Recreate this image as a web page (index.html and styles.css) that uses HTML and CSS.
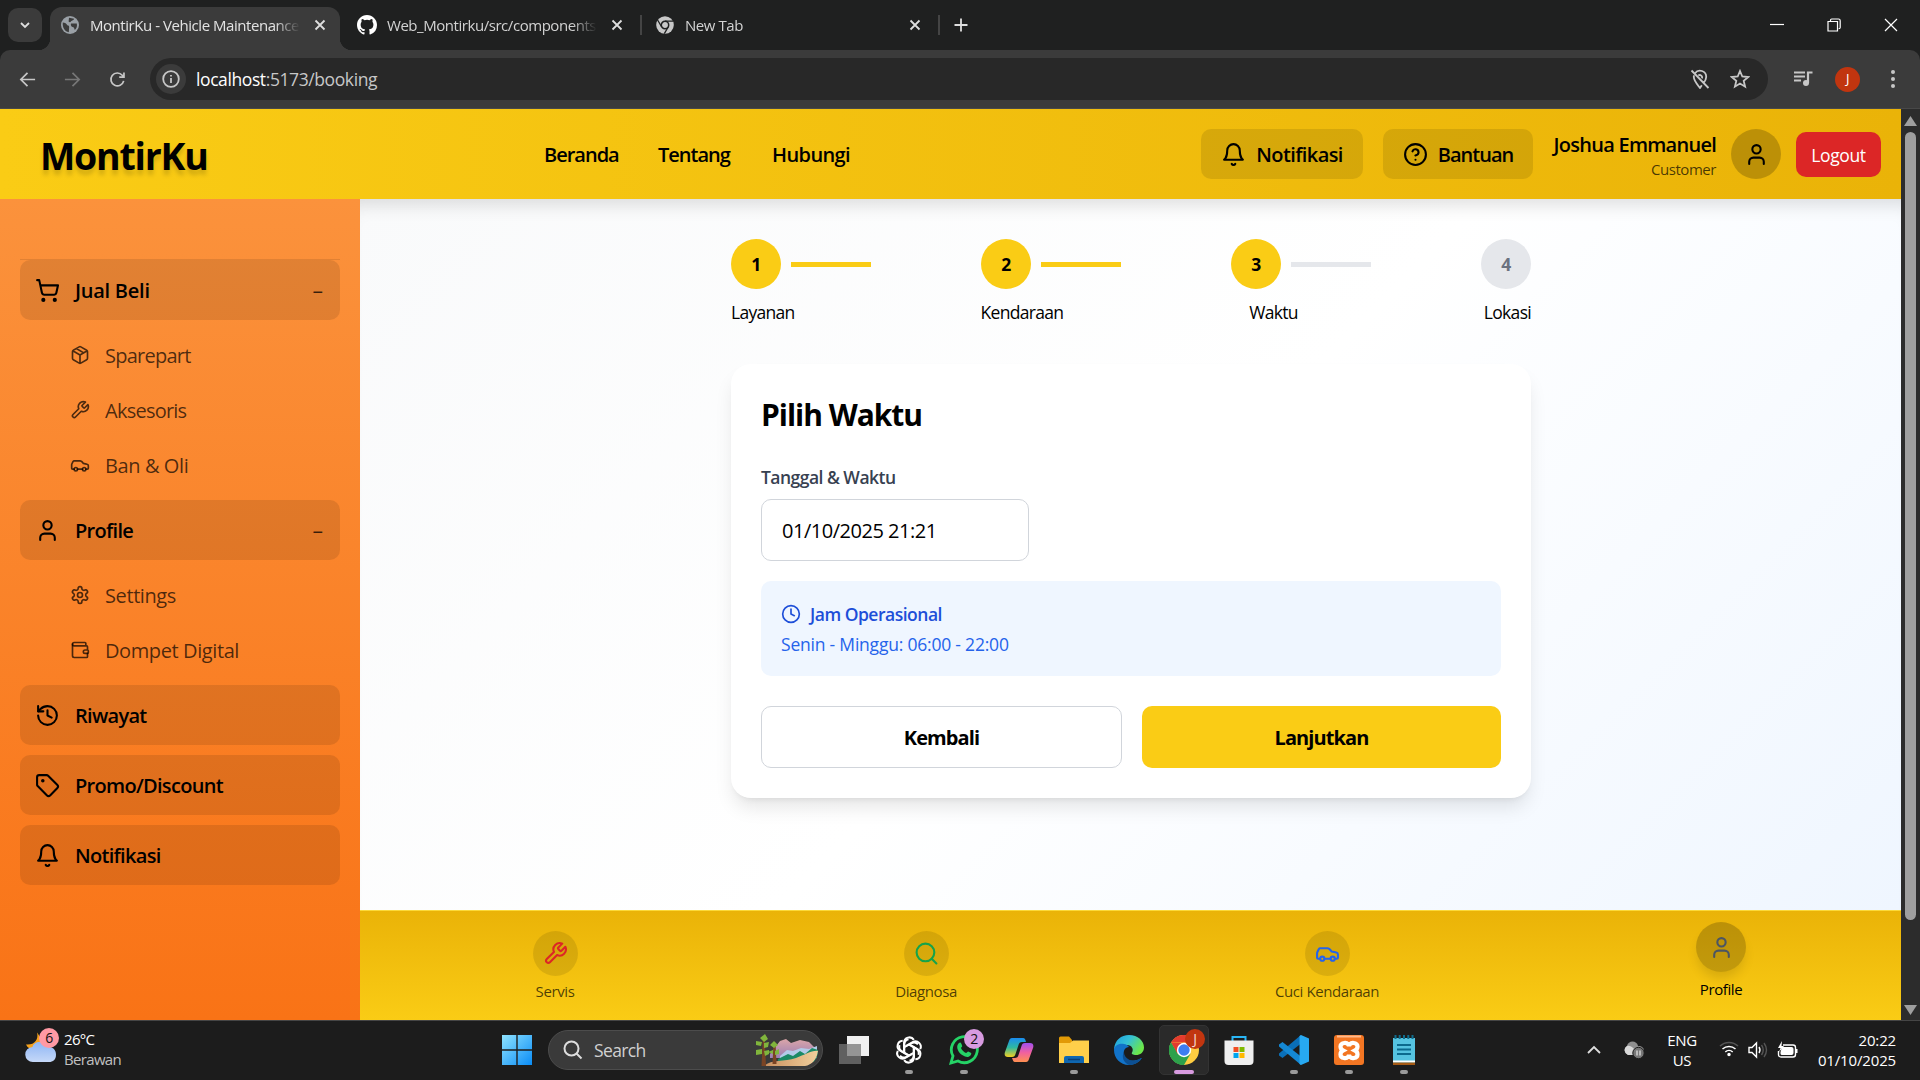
FILE: index.html
```html
<!DOCTYPE html>
<html lang="id">
<head>
<meta charset="utf-8">
<title>MontirKu - Vehicle Maintenance</title>
<link rel="stylesheet" href="styles.css">
</head>
<body>
<svg class="defs" width="0" height="0">
  <symbol id="bell" viewBox="0 0 24 24"><path d="M6 8a6 6 0 0 1 12 0c0 7 3 9 3 9H3s3-2 3-9"/><path d="M10.3 21a1.94 1.94 0 0 0 3.4 0"/></symbol>
  <symbol id="user" viewBox="0 0 24 24"><path d="M19 21v-2a4 4 0 0 0-4-4H9a4 4 0 0 0-4 4v2"/><circle cx="12" cy="7" r="4"/></symbol>
  <symbol id="wrench" viewBox="0 0 24 24"><path d="M14.7 6.3a1 1 0 0 0 0 1.4l1.6 1.6a1 1 0 0 0 1.4 0l3.77-3.77a6 6 0 0 1-7.94 7.94l-6.91 6.91a2.12 2.12 0 0 1-3-3l6.91-6.91a6 6 0 0 1 7.94-7.94l-3.76 3.76z"/></symbol>
  <symbol id="car" viewBox="0 0 24 24"><path d="M19 17h2c.6 0 1-.4 1-1v-3c0-.9-.7-1.7-1.5-1.9C18.7 10.6 16 10 16 10s-1.3-1.4-2.2-2.3c-.5-.4-1.1-.7-1.8-.7H5c-.6 0-1.1.4-1.4.9l-1.4 2.9A3.7 3.7 0 0 0 2 12v4c0 .6.4 1 1 1h2"/><circle cx="7" cy="17" r="2"/><path d="M9 17h6"/><circle cx="17" cy="17" r="2"/></symbol>
  <symbol id="close" viewBox="0 0 12 12"><path d="M1.5 1.5l9 9M10.5 1.5l-9 9"/></symbol>
</svg>

<div class="tabstrip">
  <div class="tab-search"><svg class="ln" width="12" height="12" viewBox="0 0 12 12"><path d="M2 4l4 4 4-4"/></svg></div>
  <div class="tab active">
    <svg class="fav" viewBox="0 0 18 18"><circle cx="9" cy="9" r="9" fill="#9aa0a6"/><path d="M1.8 6.5c2 .2 4 1 4.500 2.800 1.600.2 2.200 1.200 1.800 2.600l-.3 4.300c-3.800-.6-6.600-4.600-6-9.700zM8 1.800l5.200 1c-.6 1.800-2 1.600-3.200 2.400-.4 1.500-1.700 1.200-2.400.2zM10 7.500h5.800c.6 2.700-.2 5.200-2 6.600-.5-1.700-.7-3-2.300-3.200C10 10.500 9.500 9 10 7.500z" fill="#3b3b3b"/></svg>
    <span class="tab-title">MontirKu - Vehicle Maintenance</span>
    <svg class="ln x" viewBox="0 0 12 12"><use href="#close"/></svg>
  </div>
  <div class="tab">
    <svg class="fav gh" viewBox="0 0 16 16"><path fill="#fff" d="M8 0C3.580 0 0 3.580 0 8c0 3.540 2.290 6.530 5.470 7.590.4.070.550-.17.550-.38 0-.19-.010-.82-.010-1.490-2.010.370-2.530-.49-2.690-.94-.09-.23-.48-.94-.82-1.130-.28-.15-.68-.52-.010-.53.630-.010 1.080.580 1.230.820.720 1.210 1.870.870 2.330.660.070-.52.280-.87.510-1.070-1.780-.2-3.640-.89-3.640-3.950 0-.87.310-1.590.820-2.150-.08-.2-.36-1.020.080-2.120 0 0 .670-.21 2.200.820a7.600 7.600 0 0 1 4 0c1.530-1.040 2.200-.82 2.200-.82.440 1.100.160 1.920.080 2.120.510.560.820 1.270.820 2.150 0 3.070-1.870 3.750-3.650 3.950.290.250.540.730.540 1.480 0 1.070-.010 1.930-.010 2.200 0 .210.150.460.550.380A8 8 0 0 0 16 8c0-4.420-3.580-8-8-8z"/></svg>
    <span class="tab-title">Web_Montirku/src/components</span>
    <svg class="ln x" viewBox="0 0 12 12"><use href="#close"/></svg>
  </div>
  <i class="sep"></i>
  <div class="tab newtab">
    <svg class="fav" viewBox="0 0 18 18"><circle cx="9" cy="9" r="8.800" fill="#c7c7c7"/><circle cx="9" cy="9" r="3.700" fill="#c7c7c7" stroke="#1f2020" stroke-width="1.500"/><path d="M9 5.200h8.200M5.700 11L1.600 4M12.200 11L8.300 17.700" stroke="#1f2020" stroke-width="1.300"/></svg>
    <span class="tab-title">New Tab</span>
    <svg class="ln x" viewBox="0 0 12 12"><use href="#close"/></svg>
  </div>
  <i class="sep"></i>
  <svg class="ln plus" width="14" height="14" viewBox="0 0 14 14"><path d="M7 .5v13M.5 7h13"/></svg>
  <div class="win">
    <svg viewBox="0 0 14 14"><path d="M0 6.500h14"/></svg>
    <svg viewBox="0 0 14 14"><path d="M1 3.500h9.500V13H1zM3.500 3.200V2.200q0-1.200 1.200-1.200h6.800q1.700 0 1.700 1.700v6.800q0 1.200-1.500 1.200"/></svg>
    <svg viewBox="0 0 14 14"><path d="M1 1l12 12M13 1L1 13"/></svg>
  </div>
</div>

<div class="toolbar">
  <svg class="ln nav-ic" viewBox="0 0 20 20"><path d="M18 10H3.500M10 3L3 10l7 7"/></svg>
  <svg class="ln nav-ic dim" viewBox="0 0 20 20"><path d="M2 10h14.500M10 3l7 7-7 7"/></svg>
  <svg class="ln nav-ic" viewBox="0 0 20 20"><path d="M16.500 11.500A6.800 6.800 0 1 1 15 5.500l1.500 1.700M16.800 2.500v5h-5"/></svg>
  <div class="omnibox">
    <span class="info-chip"><svg class="ln" width="18" height="18" viewBox="0 0 18 18"><circle cx="9" cy="9" r="7.800"/><path d="M9 8v5M9 5v1.600"/></svg></span>
    <span class="url"><b>localhost</b>:5173/booking</span>
    <svg class="ln" width="20" height="20" viewBox="0 0 20 20"><path d="M5 4.200A6.200 6.200 0 0 1 16.200 8c0 2.300-1.200 4.300-2.800 6.500M11.800 16.300L10 19C7 15 3.800 11.500 3.800 8c0-.6.100-1 .2-1.600M1.500 1.500l17 17.500M8.300 6.500A2.400 2.400 0 0 1 11.900 9.400"/></svg>
    <svg class="ln" width="20" height="20" viewBox="0 0 20 20"><path d="M10 2l2.300 5.500 6 .5-4.600 3.900 1.400 5.800L10 14.600l-5.100 3.100 1.400-5.800L1.700 8l6-.5z"/></svg>
  </div>
  <svg class="music" width="20" height="18" viewBox="0 0 20 18"><path d="M1 2.500h11M1 6.500h11M1 10.500h7" stroke="#c7c7c7" stroke-width="2"/><path d="M15 13V2.500h4.500" fill="none" stroke="#c7c7c7" stroke-width="2.200"/><circle cx="13" cy="13" r="3" fill="#c7c7c7"/></svg>
  <span class="avatar-j">J</span>
  <svg width="4" height="18" viewBox="0 0 4 18" fill="#c7c7c7"><circle cx="2" cy="2" r="2"/><circle cx="2" cy="9" r="2"/><circle cx="2" cy="16" r="2"/></svg>
</div>

<div class="viewport">
  <div class="app">
    <header class="header">
      <div class="brand">MontirKu</div>
      <nav class="topnav"><a class="n1">Beranda</a><a class="n2">Tentang</a><a class="n3">Hubungi</a></nav>
      <div class="actions">
        <button class="soft notif"><svg class="ic"><use href="#bell"/></svg><span>Notifikasi</span></button>
        <button class="soft help"><svg class="ic" viewBox="0 0 24 24"><circle cx="12" cy="12" r="10"/><path d="M9.090 9a3 3 0 0 1 5.830 1c0 2-3 3-3 3M12 17h.01"/></svg><span>Bantuan</span></button>
        <div class="who"><strong>Joshua Emmanuel</strong><small>Customer</small></div>
        <div class="me"><svg class="ic"><use href="#user"/></svg></div>
        <button class="logout">Logout</button>
      </div>
    </header>
    <div class="body">
      <aside class="sidebar">
        <div class="item"><svg class="ic" viewBox="0 0 24 24"><circle cx="8" cy="21" r="1"/><circle cx="19" cy="21" r="1"/><path d="M2.050 2.050h2l2.660 12.420a2 2 0 0 0 2 1.580h9.780a2 2 0 0 0 1.950-1.570l1.650-7.430H5.120"/></svg><span class="wide">Jual Beli</span><i>–</i></div>
        <div class="subs">
          <div class="sub"><svg class="ic" viewBox="0 0 24 24"><path d="M21 8a2 2 0 0 0-1-1.730l-7-4a2 2 0 0 0-2 0l-7 4A2 2 0 0 0 3 8v8a2 2 0 0 0 1 1.730l7 4a2 2 0 0 0 2 0l7-4A2 2 0 0 0 21 16ZM3.300 7l8.700 5 8.700-5M12 22V12M7.500 4.270l9 5.150"/></svg><span class="tight">Sparepart</span></div>
          <div class="sub"><svg class="ic"><use href="#wrench"/></svg><span class="tight">Aksesoris</span></div>
          <div class="sub"><svg class="ic"><use href="#car"/></svg><span>Ban &amp; Oli</span></div>
        </div>
        <div class="item"><svg class="ic"><use href="#user"/></svg><span>Profile</span><i>–</i></div>
        <div class="subs">
          <div class="sub"><svg class="ic" viewBox="0 0 24 24"><path d="M12.220 2h-.44a2 2 0 0 0-2 2v.18a2 2 0 0 1-1 1.730l-.43.250a2 2 0 0 1-2 0l-.15-.08a2 2 0 0 0-2.730.730l-.22.380a2 2 0 0 0 .730 2.730l.150.100a2 2 0 0 1 1 1.720v.510a2 2 0 0 1-1 1.740l-.15.090a2 2 0 0 0-.73 2.730l.220.380a2 2 0 0 0 2.730.730l.150-.08a2 2 0 0 1 2 0l.430.250a2 2 0 0 1 1 1.730V20a2 2 0 0 0 2 2h.440a2 2 0 0 0 2-2v-.18a2 2 0 0 1 1-1.730l.430-.25a2 2 0 0 1 2 0l.150.080a2 2 0 0 0 2.730-.73l.220-.39a2 2 0 0 0-.73-2.730l-.15-.08a2 2 0 0 1-1-1.740v-.5a2 2 0 0 1 1-1.740l.150-.09a2 2 0 0 0 .730-2.730l-.22-.38a2 2 0 0 0-2.730-.73l-.15.080a2 2 0 0 1-2 0l-.43-.25a2 2 0 0 1-1-1.730V4a2 2 0 0 0-2-2z"/><circle cx="12" cy="12" r="3"/></svg><span>Settings</span></div>
          <div class="sub"><svg class="ic" viewBox="0 0 24 24"><path d="M19 7V4a1 1 0 0 0-1-1H5a2 2 0 0 0 0 4h15a1 1 0 0 1 1 1v4h-3a2 2 0 0 0 0 4h3a1 1 0 0 0 1-1v-2a1 1 0 0 0-1-1"/><path d="M3 5v14a2 2 0 0 0 2 2h15a1 1 0 0 0 1-1v-4"/></svg><span>Dompet Digital</span></div>
        </div>
        <div class="item"><svg class="ic" viewBox="0 0 24 24"><path d="M3 12a9 9 0 1 0 9-9 9.750 9.750 0 0 0-6.740 2.740L3 8"/><path d="M3 3v5h5M12 7v5l4 2"/></svg><span>Riwayat</span></div>
        <div class="item"><svg class="ic" viewBox="0 0 24 24"><path d="M12.586 2.586A2 2 0 0 0 11.172 2H4a2 2 0 0 0-2 2v7.172a2 2 0 0 0 .586 1.414l8.704 8.704a2.426 2.426 0 0 0 3.420 0l6.580-6.580a2.426 2.426 0 0 0 0-3.420z"/><circle cx="7.500" cy="7.500" r=".7" fill="currentColor"/></svg><span>Promo/Discount</span></div>
        <div class="item"><svg class="ic"><use href="#bell"/></svg><span>Notifikasi</span></div>
      </aside>
      <div class="content">
        <main class="main">
          <div class="steps">
            <div class="step done"><b>1</b><i></i></div>
            <div class="step done"><b>2</b><i></i></div>
            <div class="step current"><b>3</b><i></i></div>
            <div class="step"><b>4</b></div>
          </div>
          <div class="labels"><span>Layanan</span><span>Kendaraan</span><span>Waktu</span><span>Lokasi</span></div>
          <section class="card">
            <h2>Pilih Waktu</h2>
            <label>Tanggal &amp; Waktu</label>
            <div class="field">01/10/2025 21:21</div>
            <div class="hours">
              <div class="hours-title"><svg class="ic" viewBox="0 0 24 24"><circle cx="12" cy="12" r="10"/><path d="M12 6v6l4 2"/></svg><span>Jam Operasional</span></div>
              <p>Senin - Minggu: 06:00 - 22:00</p>
            </div>
            <div class="buttons"><button class="back">Kembali</button><button class="next">Lanjutkan</button></div>
          </section>
        </main>
        <nav class="bottomnav">
          <div class="bn servis"><span class="dot"><svg class="ic"><use href="#wrench"/></svg></span><em>Servis</em></div>
          <div class="bn diagnosa"><span class="dot"><svg class="ic" viewBox="0 0 24 24"><circle cx="11" cy="11" r="8.500"/><path d="M21.500 21.500l-4.500-4.500"/></svg></span><em>Diagnosa</em></div>
          <div class="bn cuci"><span class="dot"><svg class="ic"><use href="#car"/></svg></span><em>Cuci Kendaraan</em></div>
          <div class="bn profile"><span class="dot"><svg class="ic"><use href="#user"/></svg></span><em>Profile</em></div>
        </nav>
      </div>
    </div>
  </div>
  <div class="scrollbar">
    <svg width="13" height="10" viewBox="0 0 13 10"><path d="M6.500 0L13 10H0z"/></svg>
    <div class="thumb"></div>
    <svg class="down" width="13" height="10" viewBox="0 0 13 10"><path d="M6.500 10L13 0H0z"/></svg>
  </div>
</div>

<footer class="taskbar">
  <div class="weather">
    <div class="weather-ic">
      <svg width="32" height="38" viewBox="0 0 32 38"><defs><linearGradient id="cl" x2="0" y2="1"><stop stop-color="#8fb6f5"/><stop offset="1" stop-color="#c5d8f8"/></linearGradient></defs><path d="M12 6.500c2 7-3 13-11 12 2 5 8 6 12 4l6-6z" fill="#f6a21c"/><path d="M8 36a7.500 7.500 0 0 1-.5-15C9 15 19 14 21.500 21c5-1 9.500 2 9.500 7.500S28 36 24 36z" fill="url(#cl)"/></svg>
      <span>6</span>
    </div>
    <div class="weather-tx"><span>26°C</span><small>Berawan</small></div>
  </div>
  <div class="apps">
    <svg class="start" width="30" height="30" viewBox="0 0 30 30"><defs><linearGradient id="wn" x2="1" y2="1"><stop stop-color="#8fe3ff"/><stop offset="1" stop-color="#0a8cf5"/></linearGradient></defs><path d="M0 0h14.300v14.300H0zM15.700 0H30v14.300H15.700zM0 15.700h14.300V30H0zM15.700 15.700H30V30H15.700z" fill="url(#wn)"/></svg>
    <div class="search">
      <svg width="20" height="20" viewBox="0 0 20 20" fill="none" stroke="#ddd" stroke-width="2"><circle cx="8.500" cy="8.500" r="7"/><path d="M13.500 13.500l5 5"/></svg>
      <span>Search</span>
      <svg class="scene" width="62" height="33" viewBox="0 0 62 33"><defs><linearGradient id="mt" x2="0" y2="1"><stop stop-color="#dba5a8"/><stop offset="1" stop-color="#9b7fb5"/></linearGradient><linearGradient id="sd" x2="1"><stop stop-color="#c98f5f"/><stop offset="1" stop-color="#f0cf9c"/></linearGradient></defs><path d="M14 20l10-13 6-2 5 4 9-3 9 2 8 8v8H14z" fill="url(#mt)"/><path d="M24 22l7-6 6 1 8-3 8 1 8-3v13H24z" fill="#b3cbe8"/><path d="M22 25l10-5 5 2 7-5 5 3 7-6 6 2v12H22z" fill="#1b8a66"/><path d="M8 32c8-7 20-4 32-8 9-3 16-8 22-7-1 8-6 14-13 15z" fill="url(#sd)"/><path d="M5.500 32L7 2h1.500l1.500 30zM16.500 30l1-22h2l1 22z" fill="#7a4424"/><path d="M4 4l5-4 3 5-4 3zM0 7l6 1-1 4-5-1zM8 9l5-1-1 5-4 1zM0 16l6-1v5l-6 1zM8 17l5-1v4l-4 2zM14 11l4-4 4 4-4 3zM12 18l5-2v4zM19 17l4-2v5l-4 1z" fill="#80b53c"/></svg>
    </div>
    <div class="app-ic"><svg width="30" height="28" viewBox="0 0 30 28"><path d="M8 0h22v20H8z" fill="#f0f0f0"/><path d="M0 8h22v20H0z" fill="#777" fill-opacity=".75"/></svg></div>
    <div class="app-ic run"><svg width="30" height="30" viewBox="0 0 24 24"><g fill="none" stroke="#fff" stroke-width="1.600" stroke-linejoin="round"><path id="pt" d="M8 12.800V6.200a4.300 4.300 0 0 1 7.900-2.300M8.300 9.800l5.600-3.200a4.300 4.300 0 0 1 5.300.8"/><use href="#pt" transform="rotate(60 12 12)"/><use href="#pt" transform="rotate(120 12 12)"/><use href="#pt" transform="rotate(180 12 12)"/><use href="#pt" transform="rotate(240 12 12)"/><use href="#pt" transform="rotate(300 12 12)"/></g></svg></div>
    <div class="app-ic run"><svg width="30" height="30" viewBox="0 0 30 30"><path d="M2 28l2-7A13 13 0 1 1 9 26z" fill="none" stroke="#25d366" stroke-width="2.800"/><path d="M10 8c1-1 2-.5 2.500 1l.7 2c0 1-1.200 1.500-1.200 2 1 2.500 3 4 5 5 .8 0 1.500-1.500 2.200-1.500l3 1.500c.5 2-2 4-4 4-6-1-10-6-10-10 0-2 .8-3 1.800-4z" fill="#25d366"/></svg><span class="badge two">2</span></div>
    <div class="app-ic"><svg width="30" height="26" viewBox="0 0 30 26"><defs><linearGradient id="c1" x2="0" y2="1"><stop stop-color="#1a8cf0"/><stop offset=".5" stop-color="#2fb8a0"/><stop offset="1" stop-color="#f5d020"/></linearGradient><linearGradient id="c2" x2="0" y2="1"><stop stop-color="#a050f0"/><stop offset=".5" stop-color="#f060a0"/><stop offset="1" stop-color="#ff9050"/></linearGradient></defs><path d="M8 1h11c2 0 2.500 2 3 4h-4c-2 0-3 1-3.500 3l-3 9c-.5 2-1.500 3-3.500 3H4c-3 0-4-2-3-5L5 4c.5-2 1.500-3 3-3z" fill="url(#c1)"/><path d="M22 25H11c-2 0-2-2-3-4h3c2 0 3-1 3.500-3l3-9c.5-2 1.500-3 3.500-3H26c3 0 4 2 3 5l-4 11c-.5 2-1.500 3-3 3z" fill="url(#c2)"/></svg></div>
    <div class="app-ic run"><svg width="30" height="28" viewBox="0 0 30 28"><path d="M0 2q0-1.500 1.500-1.500H10L13 4v6H0z" fill="#e29a06"/><path d="M0 7h11l3-2.500h16V27H0z" fill="#ffcf4a"/><path d="M5 27v-5q0-2 2-2h16q2 0 2 2v5z" fill="#0f67b1"/><path d="M9 23.500h12" stroke="#083f77" stroke-width="1.500"/></svg></div>
    <div class="app-ic"><svg width="30" height="30" viewBox="0 0 30 30"><defs><linearGradient id="e1" x2="1" y2=".5"><stop stop-color="#1b9de2"/><stop offset=".5" stop-color="#35c1d5"/><stop offset="1" stop-color="#6be64a"/></linearGradient></defs><path d="M0 14C1 5 7 0 15 0c9 0 15 6 15 12.500 0 5-4 7.500-8 7.500-3 0-5-1-4-2.500 2-3 0-7.500-5-7.500-6 0-12 4-13 4z" fill="url(#e1)"/><path d="M0 15c0-4 5-7 10-6 2 .2 4 1.500 5 3-4 0-6 4-5 8 1.500 5 7 7 13 5 3-1 5-3 4.500-1.500C25 27.500 20 30 15 30 6 30 0 23 0 15z" fill="#1273c9"/><path d="M10 17c0 6 6 10 13 8 3-1 5-3 4.500-1.500C25 27.500 20 30 15 30c-5-2-8-8-5-13z" fill="#0c4f92"/></svg></div>
    <div class="app-ic run sel"><svg width="30" height="30" viewBox="0 0 30 30"><circle cx="15" cy="15" r="15" fill="#ffcd41"/><path d="M2 7.500A15 15 0 0 1 28 7.500H15z" fill="#e33b2e"/><path d="M2 7.500A15 15 0 0 0 15 30l6.500-11.200L8.500 18.700z" fill="#2da14b"/><path d="M2 7.500L8.500 19 15 8z" fill="#e33b2e"/><path d="M2 7.500L8.500 18.700 13 22l2 8A15 15 0 0 1 2 7.500z" fill="#2da14b"/><circle cx="15" cy="15" r="7.200" fill="#fff"/><circle cx="15" cy="15" r="5.700" fill="#3d7df0"/></svg><span class="badge jay">J</span></div>
    <div class="app-ic"><svg width="30" height="30" viewBox="0 0 30 30"><path d="M8.500 6V2h13v4" fill="none" stroke="#29b6f6" stroke-width="2"/><path d="M.5 5.500h29V26q0 4-4 4h-21q-4 0-4-4z" fill="#efefef"/><path d="M9.500 12h5v5h-5z" fill="#f04e23"/><path d="M15.500 12h5v5h-5z" fill="#7fba00"/><path d="M9.500 18h5v5h-5z" fill="#00a4ef"/><path d="M15.500 18h5v5h-5z" fill="#ffb900"/></svg></div>
    <div class="app-ic run"><svg width="30" height="30" viewBox="0 0 30 30"><path d="M22 0v8.500L3.500 23 0 20.500v-2z" fill="#0a6fb8"/><path d="M22 30v-8.500L3.500 7 0 9.500v2z" fill="#1488d4"/><path d="M22 0l8 3.500v23L22 30l-1.500-1V1z" fill="#27a9f2"/></svg></div>
    <div class="app-ic run"><svg width="30" height="30" viewBox="0 0 30 30"><rect width="30" height="30" rx="3" fill="#f37623"/><path d="M3 1.500h24" stroke="#ffb98a" stroke-width="2"/><path d="M10 8c4-1 5 3 5 3s1-4 5-3c5 1 4 6 1 7.500 3 1.500 4 6.500-1 7.500-4 1-5-3-5-3s-1 4-5 3c-5-1-4-6-1-7.500C6 14 5 9 10 8z" fill="none" stroke="#fff" stroke-width="4.200"/></svg></div>
    <div class="app-ic run"><svg width="22" height="30" viewBox="0 0 22 30"><path d="M0 3h22v26H0z" fill="#55c3e0"/><path d="M2.500 0v4M6.700 0v4M11 0v4M15.300 0v4M19.500 0v4" stroke="#0f6c8c" stroke-width="2"/><path d="M4 10h14M4 14.500h14M4 19h14" stroke="#0b6a8d" stroke-width="1.800"/><path d="M0 25.500h22v2H0z" fill="#fff"/><path d="M0 27.500h22V30H0z" fill="#a55a14"/></svg></div>
  </div>
  <div class="tray">
    <svg class="ln w" width="14" height="9" viewBox="0 0 14 9"><path d="M1 8l6-6 6 6"/></svg>
    <svg class="cloud" width="22" height="18" viewBox="0 0 22 18"><path d="M5 14a5 5 0 0 1-1-9C5-1 14-1 15 5c4 0 6 2 6 5s-2 4-4 4z" fill="#8f8f8f"/><path d="M5 14a5 5 0 0 1-1-9c4-1 6 2 8 4v5z" fill="#d8d8d8"/><circle cx="15.500" cy="12" r="5.700" fill="#777" stroke="#1c1c1c"/><path d="M14 9.500v5M17 9.500v5" stroke="#fff"/></svg>
    <div class="lang"><span>ENG</span><span>US</span></div>
    <div class="sys">
      <svg width="20" height="16" viewBox="0 0 20 16" fill="none" stroke="#fff" stroke-width="1.500"><path d="M1 5a13 13 0 0 1 18 0" stroke="#555"/><path d="M3.500 8a9.500 9.500 0 0 1 13 0M6.300 11a5.500 5.500 0 0 1 7.400 0"/><circle cx="10" cy="13.500" r="1" fill="#fff"/></svg>
      <svg width="20" height="18" viewBox="0 0 20 18" fill="none" stroke="#fff" stroke-width="1.400"><path d="M1 6.500h3L8.500 2v14L4 11.500H1zM11 6q2 3 0 6"/><path d="M13.500 4q3.500 5 0 10M16 2q5 7 0 14" stroke="#555"/></svg>
      <svg width="21" height="18" viewBox="0 0 21 18"><path d="M6 4h10q2.500 0 2.500 2.500v7Q18.500 16 16 16H4q-2.500 0-2.500-2.500V10" fill="none" stroke="#fff" stroke-width="1.400"/><path d="M5 6h9.500q2 0 2 2v4q0 2-2 2H5q-1.500 0-1.500-1.500V11z" fill="#fff"/><path d="M19 8h1.500v4H19zM5 0L1 7h2.500L2 11l5-6H4.500z" fill="#fff"/></svg>
    </div>
    <div class="clock"><span>20:22</span><span>01/10/2025</span></div>
  </div>
</footer>
</body>
</html>
```
FILE: styles.css
```css
* { box-sizing: border-box; }
body { margin: 0; width: 1920px; height: 1080px; overflow: hidden; display: flex; flex-direction: column; font-family: "Open Sans", "Noto Sans", sans-serif; font-size: 20px; line-height: 1.5; letter-spacing: -0.02em; background: #1f2020; color: #000; }
button { font: inherit; letter-spacing: inherit; border: 0; padding: 0; color: inherit; }
svg { flex: none; display: block; }
.defs { position: absolute; }
.ic { width: 25px; height: 25px; fill: none; stroke: currentColor; stroke-width: 2; stroke-linecap: round; stroke-linejoin: round; }
.ln { fill: none; stroke: #dedede; stroke-width: 1.8; }

/* Browser tabs */
.tabstrip { height: 50px; flex: none; display: flex; align-items: center; padding-left: 8px; background: #1f2020; color: #d2d2d2; font-size: 15px; letter-spacing: -0.03em; }
.tab-search { width: 34px; height: 34px; border-radius: 10px; background: #3b3b3b; display: grid; place-items: center; margin-right: 8px; }
.tab { width: 297px; height: 43px; margin-top: 7px; display: flex; align-items: center; padding: 0 17px 7px 17px; }
.tab.active { position: relative; width: 290px; padding: 0 14px 7px 11px; background: #3b3b3b; border-radius: 12px 12px 0 0; color: #e3e3e3; }
.tab.active::before, .tab.active::after { content: ""; position: absolute; bottom: 0; width: 12px; height: 12px; }
.tab.active::before { left: -12px; background: radial-gradient(circle at 0 0, transparent 12px, #3b3b3b 12.5px); }
.tab.active::after { right: -12px; background: radial-gradient(circle at 100% 0, transparent 12px, #3b3b3b 12.5px); }
.fav { width: 18px; height: 18px; margin-right: 11px; }
.fav.gh { width: 20px; height: 20px; margin-right: 10px; }
.tab-title { width: 210px; white-space: nowrap; overflow: hidden; -webkit-mask-image: linear-gradient(90deg, #000 88%, transparent); mask-image: linear-gradient(90deg, #000 88%, transparent); }
.tab.active + .tab { width: 300px; }
.x { width: 12px; height: 12px; margin-left: auto; }
.sep { width: 2px; height: 20px; background: #444; }
.newtab { width: 296px; padding-left: 14px; }
.plus { margin-left: 14px; }
.win { margin-left: auto; display: flex; gap: 43px; padding-right: 22px; }
.win svg { width: 14px; height: 14px; fill: none; stroke: #fff; stroke-width: 1.2; }

/* Address bar */
.toolbar { height: 59px; flex: none; display: flex; align-items: center; padding: 0 25px 0 18px; background: #3b3b3b; border-bottom: 1px solid #484848; border-radius: 10px 10px 0 0; }
.nav-ic { width: 19px; height: 19px; margin-right: 26px; }
.omnibox { width: 1620px; height: 42px; margin-left: -3px; border-radius: 21px; background: #282828; display: flex; align-items: center; gap: 20px; padding: 0 18px 0 6px; }
.omnibox .ln, .nav-ic { stroke: #c7c7c7; }
.nav-ic.dim { stroke: #777; }
.info-chip { width: 30px; height: 30px; border-radius: 50%; background: #3b3b3b; display: grid; place-items: center; }
.url { flex: 1; margin-left: -10px; font-size: 17.5px; letter-spacing: -0.023em; color: #c7c7c7; }
.url b { font-weight: 400; color: #fff; }
.music { margin: 0 22px 0 25px; }
.avatar-j { width: 25px; height: 25px; margin-right: 31px; border-radius: 50%; background: #c1350f; color: #fff; font-size: 13px; display: grid; place-items: center; }

/* Page */
.viewport { height: 911px; flex: none; display: flex; }
.app { width: 1901px; display: flex; flex-direction: column; }
.header { height: 90px; flex: none; display: flex; align-items: center; padding: 0 20px 0 40px; background: linear-gradient(90deg, #facc15, #eab308); }
.brand { width: 504px; padding-top: 4px; font-size: 37.5px; font-weight: 700; line-height: 1; letter-spacing: -0.033em; text-shadow: 0 5px 4px rgba(0,0,0,.15); }
.topnav { display: flex; padding-top: 2px; font-weight: 600; letter-spacing: -0.05em; }
.n1, .n2 { width: 114px; }
.n3 { letter-spacing: -0.03em; }
.actions { margin-left: auto; display: flex; align-items: center; }
.soft { height: 50px; display: flex; align-items: center; justify-content: center; gap: 10px; border-radius: 10px; background: rgba(0,0,0,.1); font-weight: 600; margin-right: 20px; letter-spacing: -0.03em; }
.soft span, .item span, .sub span { padding-top: 2px; }
.notif { width: 162px; }
.help { width: 150px; letter-spacing: -0.05em; }
.who { width: 163px; padding-top: 5px; display: flex; flex-direction: column; align-items: flex-end; line-height: 25px; white-space: nowrap; }
.who strong { font-weight: 600; letter-spacing: -0.037em; }
.who small { font-size: 15px; line-height: 25px; color: rgba(0,0,0,.7); letter-spacing: -0.03em; }
.me { width: 50px; height: 50px; margin: 0 15px; border-radius: 50%; background: rgba(0,0,0,.2); display: grid; place-items: center; }
.logout { width: 85px; height: 45px; padding-top: 2px; border-radius: 10px; background: #dc2626; color: #fff; font-size: 17.5px; }
.body { flex: 1; display: flex; min-height: 0; }
.sidebar { width: 360px; padding: 60px 20px 0; background: linear-gradient(180deg, #fb923c, #f97316); }
.sidebar::before { content: ""; display: block; height: 1px; background: rgba(0,0,0,.1); }
.item { height: 60px; margin-bottom: 10px; padding: 0 17px 0 15px; display: flex; align-items: center; gap: 15px; border-radius: 10px; background: rgba(0,0,0,.1); font-weight: 600; letter-spacing: -0.035em; }
.item .wide { letter-spacing: -0.012em; }
.item i { margin-left: auto; padding-top: 2px; font-style: normal; font-weight: 400; font-size: 21px; letter-spacing: 0; color: rgba(0,0,0,.75); }
.subs { display: flex; flex-direction: column; gap: 5px; margin-bottom: 10px; }
.sub { height: 50px; padding-left: 50px; display: flex; align-items: center; gap: 15px; color: rgba(0,0,0,.7); }
.sub .tight { letter-spacing: -0.038em; }
.sub .ic { width: 20px; height: 20px; }
.content { flex: 1; display: flex; flex-direction: column; }
.main { height: 711px; padding: 40px 370px 0 371px; background: linear-gradient(135deg, #f9fafb, #fff 50%, #eff6ff); box-shadow: inset 0 20px 18px -14px rgba(0,0,0,.13); }
.steps { display: flex; justify-content: space-between; }
.step { display: flex; align-items: center; gap: 10px; width: 140px; }
.step:last-child { width: 50px; }
.step b { width: 50px; height: 50px; border-radius: 50%; display: grid; place-items: center; font-size: 17.5px; font-weight: 700; background: #e5e7eb; color: #6b7280; }
.step i { width: 80px; height: 5px; background: #e5e7eb; }
.done b, .current b { background: #facc15; color: #000; }
.done i { background: #facc15; }
.labels { display: flex; justify-content: space-between; margin-top: 10px; height: 25px; font-size: 17.5px; line-height: 27px; letter-spacing: -0.04em; }
.card { margin-top: 40px; height: 434px; padding: 30px; border-radius: 20px; background: #fff; box-shadow: 0 12.5px 18.75px -3.75px rgba(0,0,0,.1), 0 5px 7.5px -5px rgba(0,0,0,.1); }
.card h2 { margin: 0 0 29px; padding-top: 1px; font-size: 30px; line-height: 40px; font-weight: 700; letter-spacing: -0.034em; }
.card label { display: block; font-size: 17.5px; line-height: 27px; margin-bottom: 8px; font-weight: 600; color: #374151; letter-spacing: -0.03em; }
.field { width: 268px; height: 62px; border: 1px solid #d1d5db; border-radius: 10px; padding: 0 20px; line-height: 62px; letter-spacing: -0.024em; }
.hours { margin-top: 20px; height: 95px; border-radius: 10px; background: #eff6ff; padding: 20px; font-size: 17.5px; line-height: 25px; color: #2563eb; letter-spacing: -0.012em; }
.hours-title { display: flex; align-items: center; gap: 9px; height: 25px; font-weight: 600; color: #1d4ed8; letter-spacing: -0.028em; }
.hours-title span { padding-top: 2px; }
.hours-title .ic { width: 20px; height: 20px; }
.hours p { margin: 6px 0 0; }
.buttons { display: flex; gap: 20px; margin-top: 30px; }
.buttons button { height: 62px; padding-top: 2px; border-radius: 10px; font-weight: 700; letter-spacing: -0.045em; }
.back { width: 361px; background: #fff; }
.buttons .back { border: 1px solid #d1d5db; }
.next { flex: 1; background: #facc15; }
.bottomnav { height: 110px; display: flex; gap: 316px; padding: 11px 0 0 172px; border-top: 1px solid #fbd93a; background: linear-gradient(180deg, #eab308, #facc15); }
.bn { display: flex; flex-direction: column; align-items: center; color: rgba(0,0,0,.7); }
.dot { width: 45px; height: 45px; margin-top: 9px; border-radius: 50%; background: rgba(0,0,0,.1); display: grid; place-items: center; }
.bn em { font-style: normal; font-size: 15px; font-weight: 500; line-height: 20px; margin-top: 5px; white-space: nowrap; }
.servis { width: 46px; } .servis .ic { color: #dc2626; }
.diagnosa { width: 64px; } .diagnosa .ic { color: #16a34a; }
.cuci { width: 106px; } .cuci .ic { color: #2563eb; }
.bottomnav .profile { width: 50px; color: #000; }
.profile .dot { width: 50px; height: 50px; margin-top: 0; background: rgba(0,0,0,.2); box-shadow: 0 8px 12px -2px rgba(0,0,0,.12); }
.profile .ic { color: #4b5563; }
.profile em { margin-top: 7px; }
.scrollbar { width: 19px; background: #2c2c2c; display: flex; flex-direction: column; align-items: center; padding: 7px 0 5px; fill: #9f9f9f; }
.thumb { width: 11px; height: 788px; margin-top: 6px; border-radius: 6px; background: #9f9f9f; }
.down { margin-top: auto; }

/* Taskbar */
.taskbar { height: 60px; flex: none; display: grid; grid-template-columns: 502px auto 1fr; background: #1c1c1c; border-top: 1px solid #454545; color: #fff; font-size: 15px; line-height: 20px; }
.weather { display: flex; align-items: center; padding-left: 25px; }
.weather-ic { position: relative; width: 32px; margin-right: 7px; }
.weather-ic svg { margin-top: -11px; }
.weather-ic span, .badge { position: absolute; width: 20px; height: 20px; border-radius: 50%; display: grid; place-items: center; font-size: 14px; color: #111; }
.weather-ic span { left: 14px; top: -9px; background: #ff99a4; }
.weather-tx { display: flex; flex-direction: column; margin-top: -3px; letter-spacing: -0.045em; }
.weather-tx small { font-size: 15px; color: #c0c0c0; }
.apps { display: flex; align-items: center; padding-bottom: 1px; }
.start { margin-right: 16px; }
.search { width: 275px; height: 40px; margin-right: 3px; padding: 0 4px 0 14px; display: flex; align-items: center; gap: 11px; border-radius: 20px; border: 1px solid #4c4c4c; background: #3a3a3a; font-size: 17.5px; letter-spacing: -0.035em; color: #d0d0d0; }
.scene { margin-left: auto; border-radius: 0 16px 16px 0; }
.app-ic { position: relative; width: 55px; height: 50px; display: grid; place-items: center; }
.run::after { content: ""; position: absolute; left: 23.5px; bottom: 1px; width: 8px; height: 4px; border-radius: 2px; background: #9a9a9a; }
.sel::before { content: ""; position: absolute; inset: 0 2.5px; border-radius: 5px; background: #2a2a2a; border: 1px solid #333; }
.sel svg { position: relative; }
.sel::after { left: 17.5px; width: 20px; background: #d89be0; }
.badge { left: 28px; top: 4px; }
.two { background: #d89be0; }
.jay { background: #c1350f; color: #f5d8d0; left: 29px; }
.tray { display: flex; align-items: center; justify-content: flex-end; padding: 0 24px 2px 0; }
.cloud { margin: 0 22px 0 22px; }
.lang { width: 30px; text-align: center; display: flex; flex-direction: column; margin-right: 22px; }
.sys { display: flex; gap: 9px; margin-right: 21px; }
.clock { display: flex; flex-direction: column; align-items: flex-end; width: 77px; letter-spacing: -0.01em; }
```
